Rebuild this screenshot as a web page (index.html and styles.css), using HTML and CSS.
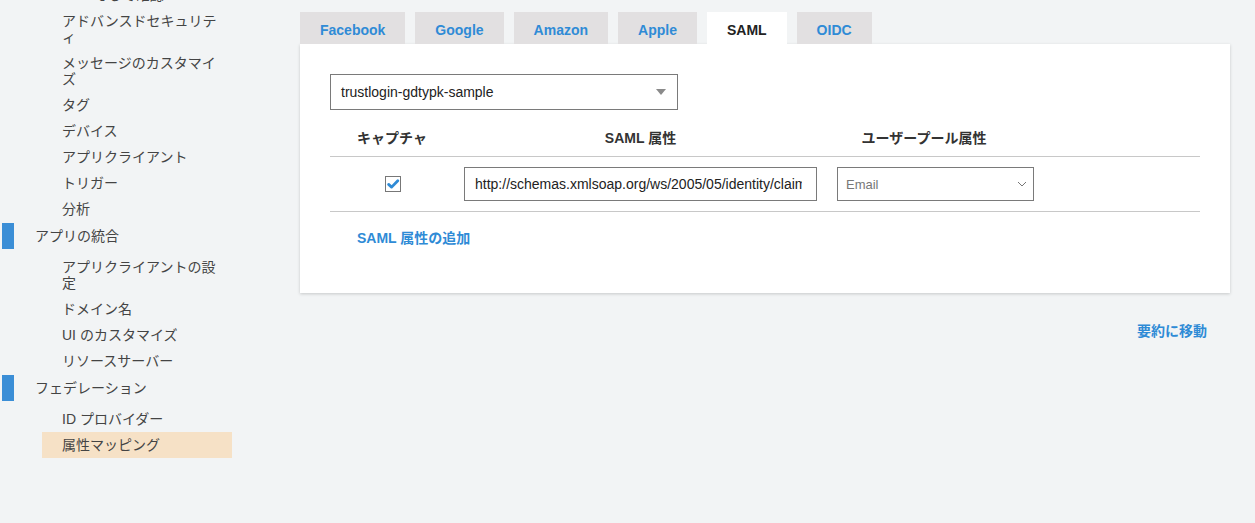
FILE: index.html
```html
<!DOCTYPE html>
<html lang="ja">
<head>
<meta charset="utf-8">
<title>属性マッピング</title>
<link rel="stylesheet" href="styles.css">
</head>
<body>
<nav class="sidebar">
  <ul class="nav">
    <li class="item">MFA そして確認</li>
    <li class="item">アドバンスドセキュリティ</li>
    <li class="item">メッセージのカスタマイズ</li>
    <li class="item">タグ</li>
    <li class="item">デバイス</li>
    <li class="item">アプリクライアント</li>
    <li class="item">トリガー</li>
    <li class="item">分析</li>
    <li class="section">アプリの統合</li>
    <li class="item">アプリクライアントの設定</li>
    <li class="item">ドメイン名</li>
    <li class="item">UI のカスタマイズ</li>
    <li class="item">リソースサーバー</li>
    <li class="section">フェデレーション</li>
    <li class="item">ID プロバイダー</li>
    <li class="item active">属性マッピング</li>
  </ul>
</nav>
<main class="main">
  <div class="tabs">
    <div class="tab">Facebook</div>
    <div class="tab">Google</div>
    <div class="tab">Amazon</div>
    <div class="tab">Apple</div>
    <div class="tab tab-active">SAML</div>
    <div class="tab">OIDC</div>
  </div>
  <section class="panel">
    <div class="provider-select">
      <span>trustlogin-gdtypk-sample</span>
      <svg class="caret" width="10" height="6" viewBox="0 0 10 6"><path d="M0 0h10L5 6z" fill="#8a8a8a"/></svg>
    </div>
    <div class="table">
      <div class="row head">
        <div class="cell c1">キャプチャ</div>
        <div class="cell c2">SAML 属性</div>
        <div class="cell c3">ユーザープール属性</div>
      </div>
      <div class="row body-row">
        <div class="cell c1">
          <span class="checkbox">
            <svg width="14" height="14" viewBox="0 0 14 14"><path d="M2.6 7.4l3 2.7 6.2-6.4" fill="none" stroke="#2f8bd6" stroke-width="2.8" stroke-linecap="round" stroke-linejoin="round"/></svg>
          </span>
        </div>
        <div class="cell c2">
          <input class="text-input" type="text" value="http://schemas.xmlsoap.org/ws/2005/05/identity/claims/emailaddress">
        </div>
        <div class="cell c3">
          <div class="attr-select">
            <span>Email</span>
            <svg width="10" height="6" viewBox="0 0 10 6"><path d="M1 1l4 4 4-4" fill="none" stroke="#777" stroke-width="1"/></svg>
          </div>
        </div>
      </div>
    </div>
    <div class="add-link">SAML 属性の追加</div>
  </section>
  <div class="footer-link"><span>要約に移動</span></div>
</main>
</body>
</html>
```
FILE: styles.css
```css
html, body {
  margin: 0;
  padding: 0;
}
body {
  background: #f2f4f5;
  font-family: "Liberation Sans", "Noto Sans CJK JP", sans-serif;
  color: #444;
  display: flex;
  align-items: flex-start;
  height: 523px;
  overflow: hidden;
}
.sidebar {
  width: 300px;
  flex: none;
}
.nav {
  list-style: none;
  margin: -18px 0 0 0;
  padding: 0;
  font-size: 14px;
  line-height: 16px;
}
.item {
  margin-left: 42px;
  width: 160px;
  padding: 5px 10px 5px 20px;
}
.item.active {
  background: #f6e1c6;
}
.section {
  margin: 0.5px 0 5.5px 2px;
  border-left: 12px solid #3b8ed6;
  padding: 5px 0 5px 21px;
}
.main {
  flex: 1;
  padding: 12px 25px 0 0;
}
.tabs {
  display: flex;
  gap: 10px;
}
.tab {
  height: 32px;
  line-height: 36px;
  padding: 0 20px;
  background: #e2e0e1;
  color: #2f8bd6;
  font-weight: bold;
  font-size: 14px;
  font-family: "Liberation Sans", sans-serif;
}
.tab-active {
  background: #fff;
  color: #222;
}
.panel {
  background: #fff;
  box-shadow: 0 1px 3px rgba(0, 0, 0, 0.18);
  padding: 30px 30px 47px 30px;
}
.provider-select {
  display: flex;
  align-items: center;
  justify-content: space-between;
  padding: 0 11px 0 10px;
  box-sizing: border-box;
  width: 348px;
  height: 36px;
  border: 1px solid #7a7a7a;
  font-size: 14px;
  color: #222;
}
.table {
  margin-top: 20px;
}
.row {
  display: grid;
  grid-template-columns: 124px 373px 194px 1fr;
  border-bottom: 1px solid #c8c8c8;
}
.head {
  padding-bottom: 10px;
  font-size: 14px;
  font-weight: bold;
  line-height: 16px;
  color: #333;
}
.head .cell {
  text-align: center;
}
.body-row {
  padding: 10px 0;
}
.body-row .cell {
  display: flex;
  align-items: center;
}
.body-row .c1 {
  justify-content: center;
}
.body-row .c2,
.body-row .c3 {
  padding-left: 10px;
}
.checkbox {
  width: 14px;
  height: 14px;
  border: 1px solid #777;
  display: flex;
  align-items: center;
  justify-content: center;
  margin-left: 1px;
}
.text-input {
  width: 353px;
  height: 34px;
  box-sizing: border-box;
  border: 1px solid #7a7a7a;
  border-radius: 0;
  padding: 0 14px 0 10px;
  font-family: "Liberation Sans", sans-serif;
  font-size: 14px;
  color: #222;
  outline: none;
  margin: 0;
}
.attr-select {
  flex: none;
  width: 197px;
  height: 34px;
  box-sizing: border-box;
  border: 1px solid #7a7a7a;
  display: flex;
  align-items: center;
  justify-content: space-between;
  padding: 0 6px 0 8px;
  font-size: 13px;
  color: #777;
}
.add-link {
  margin-top: 18px;
  padding-left: 27px;
  font-size: 14px;
  font-weight: bold;
  line-height: 16px;
  color: #2f8bd6;
}
.footer-link {
  margin-top: 30px;
  padding-right: 23px;
  text-align: right;
  font-size: 14px;
  font-weight: bold;
  line-height: 16px;
  color: #2f8bd6;
}
```
